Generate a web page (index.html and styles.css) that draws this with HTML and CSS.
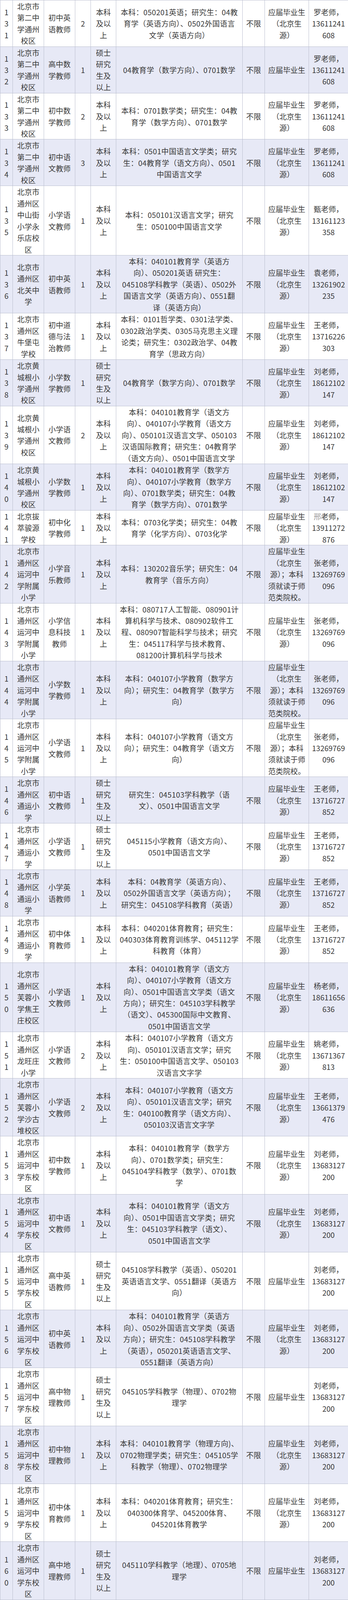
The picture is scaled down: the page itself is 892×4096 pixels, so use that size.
FILE: index.html
```html
<!DOCTYPE html>
<html lang="zh-CN">
<head>
<meta charset="utf-8">
<title>招聘岗位表</title>
<link rel="stylesheet" href="styles.css">
</head>
<body>
<table class="jobs">
<colgroup>
<col class="c-no"><col class="c-unit"><col class="c-post"><col class="c-num"><col class="c-edu"><col class="c-major"><col class="c-age"><col class="c-src"><col class="c-tel">
</colgroup>
<tbody>
<tr>
<td>1<br>3<br>1</td><td>北京市<br>第二中<br>学通州<br>校区</td><td>初中英<br>语教师</td><td>2</td><td>本科<br>及以<br>上</td>
<td>本科：050201英语；研究生：04教<br>育学（英语方向）、0502外国语言<br>文学（英语方向）</td><td>不限</td><td>应届毕业生<br>（北京生<br>源）</td><td>罗老师，<br>13611241<br>608</td>
</tr>
<tr class="alt">
<td>1<br>3<br>2</td><td>北京市<br>第二中<br>学通州<br>校区</td><td>高中数<br>学教师</td><td>1</td><td>硕士<br>研究<br>生及<br>以上</td>
<td>04教育学（数学方向）、0701数学</td><td>不限</td><td>应届毕业生</td><td>罗老师，<br>13611241<br>608</td>
</tr>
<tr>
<td>1<br>3<br>3</td><td>北京市<br>第二中<br>学通州<br>校区</td><td>初中数<br>学教师</td><td>2</td><td>本科<br>及以<br>上</td>
<td>本科：0701数学类；研究生：04教<br>育学（数学方向）、0701数学</td><td>不限</td><td>应届毕业生<br>（北京生<br>源）</td><td>罗老师，<br>13611241<br>608</td>
</tr>
<tr class="alt">
<td>1<br>3<br>4</td><td>北京市<br>第二中<br>学通州<br>校区</td><td>初中语<br>文教师</td><td>3</td><td>本科<br>及以<br>上</td>
<td>本科：0501中国语言文学类；研究<br>生：04教育学（语文方向）、0501<br>中国语言文学</td><td>不限</td><td>应届毕业生<br>（北京生<br>源）</td><td>罗老师，<br>13611241<br>608</td>
</tr>
<tr>
<td>1<br>3<br>5</td><td>北京市<br>通州区<br>中山街<br>小学永<br>乐店校<br>区</td><td>小学语<br>文教师</td><td>1</td><td>本科<br>及以<br>上</td>
<td>本科：050101汉语言文学；研究<br>生：050100中国语言文学</td><td>不限</td><td>应届毕业生<br>（北京生<br>源）</td><td>甄老师，<br>13161123<br>358</td>
</tr>
<tr class="alt">
<td>1<br>3<br>6</td><td>北京市<br>通州区<br>北关中<br>学</td><td>初中英<br>语教师</td><td>1</td><td>本科<br>及以<br>上</td>
<td>本科：040101教育学（英语方<br>向）、050201英语 研究生：<br>045108学科教学（英语）、0502外<br>国语言文学（英语方向）、0551翻<br>译（英语方向）</td><td>不限</td><td>应届毕业生<br>（北京生<br>源）</td><td>袁老师，<br>13261902<br>235</td>
</tr>
<tr>
<td>1<br>3<br>7</td><td>北京市<br>通州区<br>牛堡屯<br>学校</td><td>初中道<br>德与法<br>治教师</td><td>1</td><td>本科<br>及以<br>上</td>
<td>本科：0101哲学类、0301法学类、<br>0302政治学类、0305马克思主义理<br>论类；研究生：0302政治学、04教<br>育学（思政方向）</td><td>不限</td><td>应届毕业生<br>（北京生<br>源）</td><td>王老师，<br>13716226<br>303</td>
</tr>
<tr class="alt">
<td>1<br>3<br>8</td><td>北京黄<br>城根小<br>学通州<br>校区</td><td>小学数<br>学教师</td><td>1</td><td>硕士<br>研究<br>生及<br>以上</td>
<td>04教育学（数学方向）、0701数学</td><td>不限</td><td>应届毕业生<br>（北京生<br>源）</td><td>刘老师，<br>18612102<br>147</td>
</tr>
<tr>
<td>1<br>3<br>9</td><td>北京黄<br>城根小<br>学通州<br>校区</td><td>小学语<br>文教师</td><td>2</td><td>本科<br>及以<br>上</td>
<td>本科：040101教育学（语文方<br>向）、040107小学教育（语文方<br>向）、050101汉语言文学、050103<br>汉语国际教育；研究生：04教育学<br>（语文方向）、0501中国语言文学</td><td>不限</td><td>应届毕业生<br>（北京生<br>源）</td><td>刘老师，<br>18612102<br>147</td>
</tr>
<tr class="alt">
<td>1<br>4<br>0</td><td>北京黄<br>城根小<br>学通州<br>校区</td><td>小学数<br>学教师</td><td>1</td><td>本科<br>及以<br>上</td>
<td>本科：040101教育学（数学方<br>向）、040107小学教育（数学方<br>向）、0701数学类；研究生：04教<br>育学（数学方向）、0701数学</td><td>不限</td><td>应届毕业生<br>（北京生<br>源）</td><td>刘老师，<br>18612102<br>147</td>
</tr>
<tr>
<td>1<br>4<br>1</td><td>北京拔<br>萃骏源<br>学校</td><td>初中化<br>学教师</td><td>1</td><td>本科<br>及以<br>上</td>
<td>本科：0703化学类；研究生：04教<br>育学（化学方向）、0703化学</td><td>不限</td><td>应届毕业生<br>（北京生<br>源）</td><td><span class="faint">邢</span>老师，<br>13911272<br>876</td>
</tr>
<tr class="alt">
<td>1<br>4<br>2</td><td>北京市<br>通州区<br>运河中<br>学附属<br>小学</td><td>小学音<br>乐教师</td><td>1</td><td>本科<br>及以<br>上</td>
<td>本科：130202音乐学；研究生：04<br>教育学（音乐方向）</td><td>不限</td><td>应届毕业生<br>（北京生<br>源）；本科<br>须就读于师<br>范类院校。</td><td>张老师，<br>13269769<br>096</td>
</tr>
<tr>
<td>1<br>4<br>3</td><td>北京市<br>通州区<br>运河中<br>学附属<br>小学</td><td>小学信<br>息科技<br>教师</td><td>1</td><td>本科<br>及以<br>上</td>
<td>本科：080717人工智能、080901计<br>算机科学与技术、080902软件工<br>程、080907智能科学与技术；研究<br>生：045117科学与技术教育、<br>081200计算机科学与技术</td><td>不限</td><td>应届毕业生<br>（北京生<br>源）</td><td>张老师，<br>13269769<br>096</td>
</tr>
<tr class="alt">
<td>1<br>4<br>4</td><td>北京市<br>通州区<br>运河中<br>学附属<br>小学</td><td>小学数<br>学教师</td><td>1</td><td>本科<br>及以<br>上</td>
<td>本科：040107小学教育（数学方<br>向）；研究生：04教育学（数学方<br>向）</td><td>不限</td><td>应届毕业生<br>（北京生<br>源）；本科<br>须就读于师<br>范类院校。</td><td>张老师，<br>13269769<br>096</td>
</tr>
<tr>
<td>1<br>4<br>5</td><td>北京市<br>通州区<br>运河中<br>学附属<br>小学</td><td>小学语<br>文教师</td><td>1</td><td>本科<br>及以<br>上</td>
<td>本科：040107小学教育（语文方<br>向）；研究生：04教育学（语文方<br>向）</td><td>不限</td><td>应届毕业生<br>（北京生<br>源）；本科<br>须就读于师<br>范类院校。</td><td>张老师，<br>13269769<br>096</td>
</tr>
<tr class="alt">
<td>1<br>4<br>6</td><td>北京市<br>通州区<br>通运小<br>学</td><td>初中语<br>文教师</td><td>1</td><td>硕士<br>研究<br>生及<br>以上</td>
<td>研究生：045103学科教学（语<br>文）、0501中国语言文学</td><td>不限</td><td>应届毕业生<br>（北京生<br>源）</td><td>王老师，<br>13716727<br>852</td>
</tr>
<tr>
<td>1<br>4<br>7</td><td>北京市<br>通州区<br>通运小<br>学</td><td>小学语<br>文教师</td><td>1</td><td>硕士<br>研究<br>生及<br>以上</td>
<td>045115小学教育（语文方向）、<br>0501中国语言文学</td><td>不限</td><td>应届毕业生<br>（北京生<br>源）</td><td>王老师，<br>13716727<br>852</td>
</tr>
<tr class="alt">
<td>1<br>4<br>8</td><td>北京市<br>通州区<br>通运小<br>学</td><td>小学英<br>语教师</td><td>1</td><td>本科<br>及以<br>上</td>
<td>本科：04教育学（英语方向）、<br>0502外国语言文学（英语方向）；<br>研究生：045108学科教育（英语）</td><td>不限</td><td>应届毕业生<br>（北京生<br>源）</td><td>王老师，<br>13716727<br>852</td>
</tr>
<tr>
<td>1<br>4<br>9</td><td>北京市<br>通州区<br>通运小<br>学</td><td>初中体<br>育教师</td><td>1</td><td>本科<br>及以<br>上</td>
<td>本科：040201体育教育；研究生：<br>040303体育教育训练学、045112学<br>科教育（体育）</td><td>不限</td><td>应届毕业生<br>（北京生<br>源）</td><td>王老师，<br>13716727<br>852</td>
</tr>
<tr class="alt">
<td>1<br>5<br>0</td><td>北京市<br>通州区<br>芙蓉小<br>学焦王<br>庄校区</td><td>小学语<br>文教师</td><td>1</td><td>本科<br>及以<br>上</td>
<td>本科：040101教育学（语文方<br>向）、040107小学教育（语文方<br>向）、0501中国语言文学类（语文<br>方向）；研究生：045103学科教学<br>（语文）、045300国际中文教育、<br>0501中国语言文学</td><td>不限</td><td>应届毕业生<br>（北京生<br>源）</td><td>杨老师，<br>18611656<br>636</td>
</tr>
<tr>
<td>1<br>5<br>1</td><td>北京市<br>通州区<br>龙旺庄<br>小学</td><td>小学语<br>文教师</td><td>2</td><td>本科<br>及以<br>上</td>
<td>本科：040107小学教育（语文方<br>向)、050101汉语言文学；研究<br>生：050100中国语言文学、050103<br>汉语言文字学</td><td>不限</td><td>应届毕业生<br>（北京生<br>源）</td><td>姚老师，<br>13671367<br>813</td>
</tr>
<tr class="alt">
<td>1<br>5<br>2</td><td>北京市<br>通州区<br>芙蓉小<br>学沙古<br>堆校区</td><td>小学语<br>文教师</td><td>2</td><td>本科<br>及以<br>上</td>
<td>本科：040107小学教育（语文方<br>向）、050101汉语言文学；研究<br>生：040100教育学（语文方向）、<br>050103汉语言文字学</td><td>不限</td><td>应届毕业生<br>（北京生<br>源）</td><td>王老师，<br>13661379<br>476</td>
</tr>
<tr>
<td>1<br>5<br>3</td><td>北京市<br>通州区<br>运河中<br>学东校<br>区</td><td>初中数<br>学教师</td><td>1</td><td>本科<br>及以<br>上</td>
<td>本科：040101教育学（数学方<br>向）、0701数学类；研究生：<br>045104学科教学（数学）、0701数<br>学</td><td>不限</td><td>应届毕业生<br>（北京生<br>源）</td><td>刘老师，<br>13683127<br>200</td>
</tr>
<tr class="alt">
<td>1<br>5<br>4</td><td>北京市<br>通州区<br>运河中<br>学东校<br>区</td><td>初中语<br>文教师</td><td>1</td><td>本科<br>及以<br>上</td>
<td>本科：040101教育学（语文方<br>向）、0501中国语言文学类；研究<br>生：045103学科教学（语文）、<br>0501中国语言文学</td><td>不限</td><td>应届毕业生<br>（北京生<br>源）</td><td>刘老师，<br>13683127<br>200</td>
</tr>
<tr>
<td>1<br>5<br>5</td><td>北京市<br>通州区<br>运河中<br>学东校<br>区</td><td>高中英<br>语教师</td><td>1</td><td>硕士<br>研究<br>生及<br>以上</td>
<td>045108学科教学（英语）、050201<br>英语语言文学、0551翻译（英语方<br>向）</td><td>不限</td><td>应届毕业生</td><td>刘老师，<br>13683127<br>200</td>
</tr>
<tr class="alt">
<td>1<br>5<br>6</td><td>北京市<br>通州区<br>运河中<br>学东校<br>区</td><td>初中英<br>语教师</td><td>1</td><td>本科<br>及以<br>上</td>
<td>本科：040101教育学（英语方<br>向）、0502外国语言文学类（英语<br>方向）；研究生：045108学科教学<br>（英语），050201英语语言文学、<br>0551翻译（英语方向）</td><td>不限</td><td>应届毕业生<br>（北京生<br>源）</td><td>刘老师，<br>13683127<br>200</td>
</tr>
<tr>
<td>1<br>5<br>7</td><td>北京市<br>通州区<br>运河中<br>学东校<br>区</td><td>高中物<br>理教师</td><td>1</td><td>硕士<br>研究<br>生及<br>以上</td>
<td>045105学科教学（物理）、0702物<br>理学</td><td>不限</td><td>应届毕业生</td><td>刘老师，<br>13683127<br>200</td>
</tr>
<tr class="alt">
<td>1<br>5<br>8</td><td>北京市<br>通州区<br>运河中<br>学东校<br>区</td><td>初中物<br>理教师</td><td>1</td><td>本科<br>及以<br>上</td>
<td>本科：040101教育学（物理方向)、<br>0702物理学类；研究生：045105学<br>科教学（物理）、0702物理学</td><td>不限</td><td>应届毕业生<br>（北京生<br>源）</td><td>刘老师，<br>13683127<br>200</td>
</tr>
<tr>
<td>1<br>5<br>9</td><td>北京市<br>通州区<br>运河中<br>学东校<br>区</td><td>初中体<br>育教师</td><td>1</td><td>本科<br>及以<br>上</td>
<td>本科：040201体育教育；研究生：<br>040300体育学、045200体育、<br>045201体育教学</td><td>不限</td><td>应届毕业生<br>（北京生<br>源）</td><td>刘老师，<br>13683127<br>200</td>
</tr>
<tr class="alt">
<td>1<br>6<br>0</td><td>北京市<br>通州区<br>运河中<br>学东校<br>区</td><td>高中地<br>理教师</td><td>1</td><td>硕士<br>研究<br>生及<br>以上</td>
<td>045110学科教学（地理）、0705地<br>理学</td><td>不限</td><td>应届毕业生</td><td>刘老师，<br>13683127<br>200</td>
</tr>
</tbody>
</table>
</body>
</html>
```

FILE: styles.css
```css
html, body {
  margin: 0;
  padding: 0;
  background: #ffffff;
}

.jobs {
  border-collapse: collapse;
  table-layout: fixed;
  width: 892px;
  font-family: "Noto Sans CJK SC", "Noto Sans", sans-serif;
  font-size: 19px;
  line-height: 29.45px;
  color: #383838;
}

.c-no { width: 32px; }
.c-unit { width: 80px; }
.c-post { width: 80px; }
.c-num { width: 40px; }
.c-edu { width: 65px; }
.c-major { width: 324px; }
.c-age { width: 57px; }
.c-src { width: 113px; }
.c-tel { width: 101px; }

.jobs td {
  border: 1px solid #bcc0d0;
  padding: 0 3px;
  text-align: center;
  vertical-align: middle;
  white-space: nowrap;
  overflow: hidden;
  background: #ffffff;
}

.jobs td:nth-child(6) {
  letter-spacing: 0.35px;
}

.jobs tr.alt td {
  background: #e7e9f6;
}

.faint {
  color: #9a9a9a;
}
```
